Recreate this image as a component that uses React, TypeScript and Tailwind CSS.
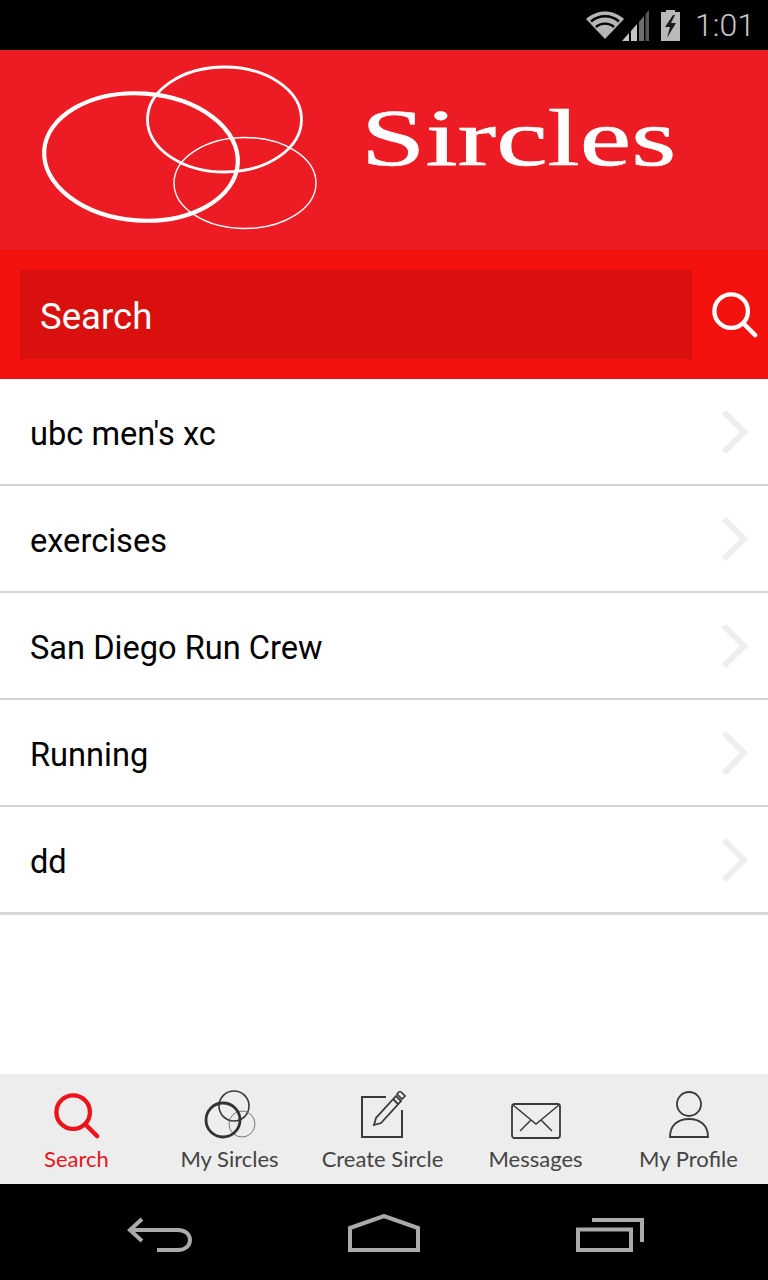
import React from "react";

const rows = ["ubc men's xc", "exercises", "San Diego Run Crew", "Running", "dd"];

function Chevron() {
  return (
    <svg width="30" height="46" viewBox="0 0 30 46" className="shrink-0">
      <path d="M4 3 L24 23 L4 43" fill="none" stroke="#eeeeee" strokeWidth="6" />
    </svg>
  );
}

function Wifi() {
  return (
    <svg width="40" height="32" viewBox="0 0 40 32">
      <path d="M19 29 L0 9 C11 -1 27 -1 38 9 Z" fill="#b5b5b5" />
      <path d="M5 11.5 C13 4.5 25 4.5 33 11.5 M10 17 C15 12.5 23 12.5 28 17" fill="none" stroke="#000" strokeWidth="2.4" />
    </svg>
  );
}

function Signal() {
  return (
    <svg width="30" height="32" viewBox="0 0 30 32">
      <path d="M1 31 L8 23 L8 31 Z" fill="#c4c4c4" />
      <path d="M10 21 L16 14 L16 31 L10 31 Z" fill="#c4c4c4" />
      <path d="M18 12 L23 6 L23 31 L18 31 Z" fill="#6e6e6e" />
      <path d="M24.500 4 L28 0 L28 31 L24.500 31 Z" fill="#555555" />
    </svg>
  );
}

function Battery() {
  return (
    <svg width="22" height="32" viewBox="0 0 22 32">
      <path d="M6 0 H15 V2 H20 V31 H1 V2 H6 Z" fill="#b9b9b9" />
      <path d="M13 5 L5 17 H10 L7 28 L16 13 H11 L15 5 Z" fill="#1c1c1c" />
    </svg>
  );
}

function Logo() {
  return (
    <svg width="290" height="175" viewBox="40 60 290 175" className="shrink-0">
      <ellipse cx="141" cy="157" rx="97" ry="63.500" fill="none" stroke="#fff" strokeWidth="4.200" transform="rotate(4 141 157)" />
      <ellipse cx="224.500" cy="119.500" rx="77" ry="52.500" fill="none" stroke="#fff" strokeWidth="2.800" />
      <ellipse cx="245" cy="183" rx="71" ry="45.500" fill="none" stroke="#fff" strokeWidth="1.400" />
    </svg>
  );
}

function SearchGlyph({ color, width, size }: { color: string; width: number; size: number }) {
  return (
    <svg width={size} height={size} viewBox="0 0 48 48">
      <circle cx="20" cy="20" r="17.500" fill="none" stroke={color} strokeWidth={width} />
      <path d="M33 33 L45 45" fill="none" stroke={color} strokeWidth={width} strokeLinecap="round" />
    </svg>
  );
}

function SirclesIcon() {
  return (
    <svg width="52" height="50" viewBox="0 0 52 50">
      <circle cx="30" cy="17" r="15" fill="none" stroke="#3a3a3a" strokeWidth="1.600" />
      <circle cx="38" cy="35" r="13" fill="none" stroke="#777" strokeWidth="1" />
      <circle cx="19" cy="31" r="17" fill="none" stroke="#333" strokeWidth="2.800" />
    </svg>
  );
}

function CreateIcon() {
  return (
    <svg width="46" height="48" viewBox="0 0 46 48">
      <path d="M26 6 H2 V46 H42 V19" fill="none" stroke="#3a3a3a" strokeWidth="2" />
      <path d="M14 34 L16 27 L36 5 L41 10 L21 32 Z M33 8 L38 13" fill="none" stroke="#3a3a3a" strokeWidth="1.800" />
      <path d="M37 3 L40 0 L45 5 L42 8 Z" fill="none" stroke="#3a3a3a" strokeWidth="1.600" />
    </svg>
  );
}

function MailIcon() {
  return (
    <svg width="50" height="36" viewBox="0 0 50 36">
      <rect x="1" y="1" width="48" height="34" rx="2.500" fill="none" stroke="#3a3a3a" strokeWidth="1.800" />
      <path d="M2 2 L25 21 L48 2 M9 28 L20 17 M41 28 L30 17" fill="none" stroke="#3a3a3a" strokeWidth="1.500" />
    </svg>
  );
}

function ProfileIcon() {
  return (
    <svg width="40" height="48" viewBox="0 0 40 48">
      <circle cx="20" cy="13" r="12" fill="none" stroke="#3a3a3a" strokeWidth="1.800" />
      <path d="M1 46 C1 34 9 28 20 28 C31 28 39 34 39 46 Z" fill="none" stroke="#3a3a3a" strokeWidth="1.800" />
    </svg>
  );
}

function Tab({ label, icon, active }: { label: string; icon: React.ReactNode; active?: boolean }) {
  return (
    <div className="flex flex-1 flex-col items-center">
      <div className="flex h-[50px] items-end justify-center">{icon}</div>
      <span className={`mt-[5px] text-[22px] leading-[30px] font-['Lato','Liberation_Sans',sans-serif] ${active ? "text-[#e9141c]" : "text-[#444444]"}`}>
        {label}
      </span>
    </div>
  );
}

export default function App() {
  return (
    <div className="flex h-[1280px] w-[768px] flex-col overflow-hidden bg-white font-['Roboto','Liberation_Sans',sans-serif]">
      <div className="flex h-[50px] items-center justify-end gap-[4px] bg-black pr-[13px]">
        <div className="flex items-center pt-[1px]">
          <Wifi />
          <div className="-ml-[5px]"><Signal /></div>
        </div>
        <div className="ml-[5px] pt-[1px]"><Battery /></div>
        <span className="ml-[9px] text-[32px] leading-[50px] font-light text-[#c8c8c8]">1:01</span>
      </div>

      <div className="flex h-[200px] items-start bg-[#ed1c24] pl-[40px] pt-[10px]">
        <Logo />
        <span className="ml-[31px] mt-[38px] origin-left scale-x-[1.43] text-[81px] leading-none text-white [-webkit-text-stroke:0.7px_white] font-['Liberation_Serif',serif]">Sircles</span>
      </div>

      <div className="flex h-[129px] items-center bg-[#f4120f] pl-[20px] pr-[10px]">
        <div className="flex h-[89px] w-[672px] items-center bg-[#d9100d] pl-[20px] pt-[5px] text-[36.600px] text-white">Search</div>
        <div className="ml-auto flex items-center"><SearchGlyph color="#ffffff" width={4.500} size={46} /></div>
      </div>

      <div className="flex flex-col">
        {rows.map((r, i) => (
          <div key={r} className={`flex items-center justify-between pl-[30px] pr-[18px] ${i === rows.length - 1 ? "h-[108px] border-b-[3px] border-[#d8d8d8]" : "h-[107px] border-b-2 border-[#d4d4d4]"}`}>
            <span className="pt-[6px] text-[32.600px] text-black">{r}</span>
            <Chevron />
          </div>
        ))}
      </div>

      <div className="flex-1" />

      <div className="flex h-[110px] bg-[#ededed] pr-[3px] pt-[15px]">
        <Tab active label="Search" icon={<SearchGlyph color="#e9141c" width={4.500} size={46} />} />
        <Tab label="My Sircles" icon={<SirclesIcon />} />
        <Tab label="Create Sircle" icon={<CreateIcon />} />
        <Tab label="Messages" icon={<MailIcon />} />
        <Tab label="My Profile" icon={<ProfileIcon />} />
      </div>

      <div className="flex h-[96px] items-start bg-black pl-[126px] pt-[30px]">
        <svg width="68" height="40" viewBox="0 0 68 40" className="shrink-0">
          <path d="M16 5 L4 16 L16 27 M4 16 H52 C68 16 68 36 52 36 H31" fill="none" stroke="#aaaaaa" strokeWidth="4" />
        </svg>
        <svg width="72" height="40" viewBox="0 0 72 40" className="ml-[154px] shrink-0">
          <path d="M2 14 L36 2 L70 14 V36 H2 Z" fill="none" stroke="#aaaaaa" strokeWidth="4" />
        </svg>
        <svg width="70" height="40" viewBox="0 0 70 40" className="ml-[156px] shrink-0">
          <path d="M16 6 H66 V28" fill="none" stroke="#aaaaaa" strokeWidth="4" />
          <rect x="2" y="15.500" width="53" height="20.500" fill="none" stroke="#aaaaaa" strokeWidth="4" />
        </svg>
      </div>
    </div>
  );
}
